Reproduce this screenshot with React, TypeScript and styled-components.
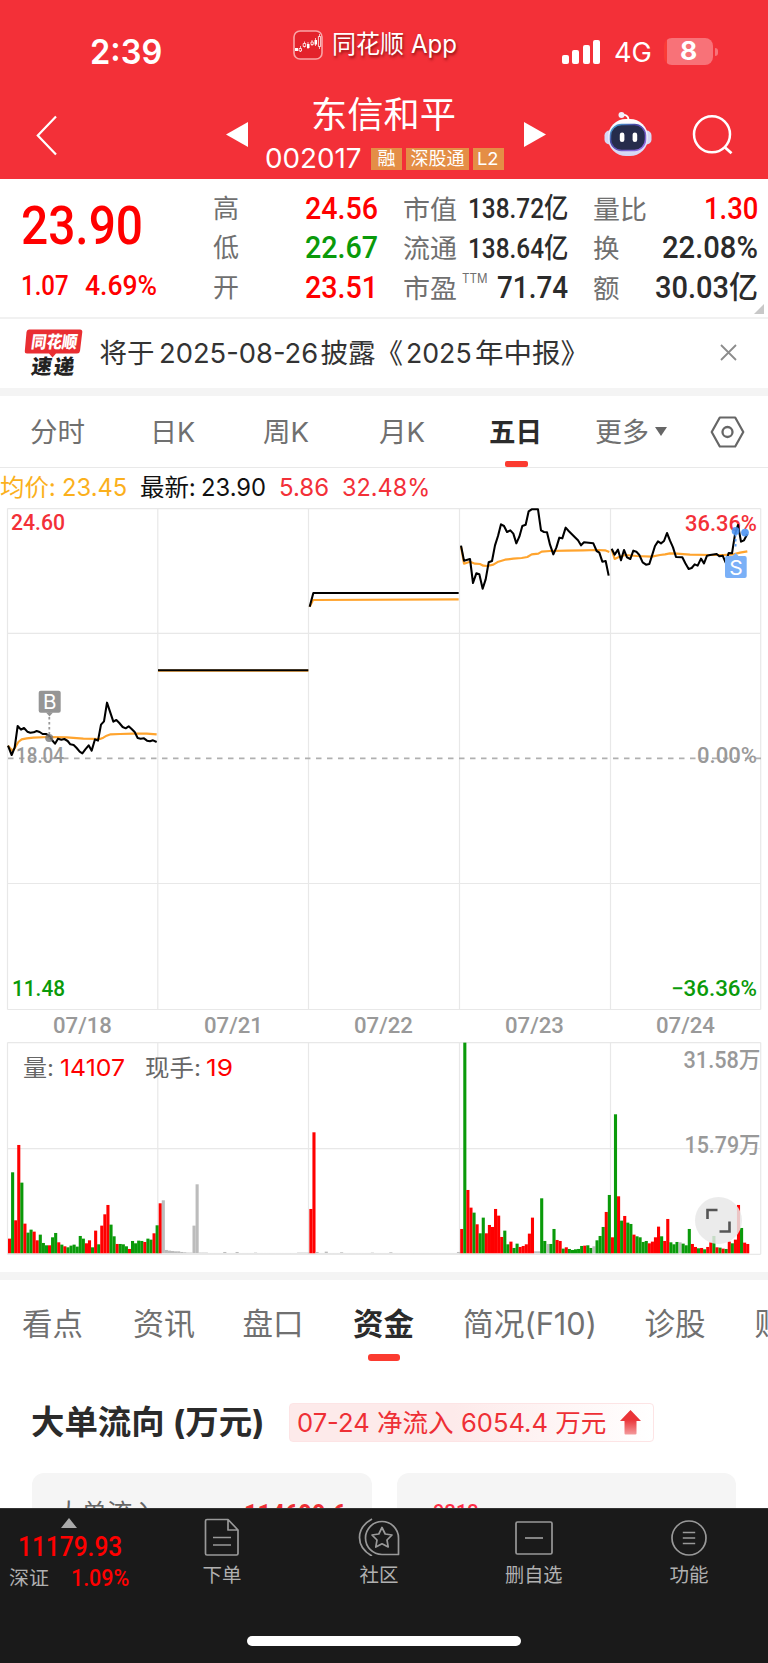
import React, { useLayoutEffect, useRef, useState } from 'react';
import styled, { createGlobalStyle } from 'styled-components';

const DIN = 'Roboto, "Noto Sans CJK SC", sans-serif';
const UI = 'Inter, "Noto Sans CJK SC", sans-serif';

const GlobalStyle = createGlobalStyle`
  * { box-sizing: border-box; }
  body { margin: 0; background: #fff; font-family: ${UI}; }
  svg { display: block; flex: none; }
`;

/* ---------- text fitted to a fixed advance ---------- */
interface TextProps {
  $w: number; $h: number; $size: number; $weight: number; $color: string;
  $din?: boolean; $shadow?: boolean;
}
const TextBox = styled.span<TextProps>`
  display: block;
  flex: none;
  width: ${p => p.$w}px;
  height: ${p => p.$h}px;
  line-height: ${p => p.$h}px;
  font-family: ${p => (p.$din ? DIN : UI)};
  font-size: ${p => p.$size}px;
  font-weight: ${p => p.$weight};
  color: ${p => p.$color};
  white-space: nowrap;
  text-shadow: ${p => (p.$shadow ? '1px 2px 3px rgba(90,0,0,.7)' : 'none')};
`;
const TextInner = styled.span`
  display: inline-block;
  transform-origin: 0 50%;
  white-space: pre;
`;
interface TProps {
  w: number; size: number; h?: number; weight?: number; color?: string;
  din?: boolean; shadow?: boolean; children: string; className?: string;
}
function T({ w, size, h, weight = 400, color = '#333', din, shadow, children, className }: TProps) {
  const ref = useRef<HTMLSpanElement>(null);
  const [scale, setScale] = useState(1);
  useLayoutEffect(() => {
    if (ref.current) setScale(w / ref.current.offsetWidth);
  }, [w, children]);
  return (
    <TextBox className={className} $w={w} $h={h ?? Math.round(size * 1.3)} $size={size}
      $weight={weight} $color={color} $din={din} $shadow={shadow}>
      <TextInner ref={ref} style={{ transform: `scaleX(${scale})` }}>{children}</TextInner>
    </TextBox>
  );
}

const Page = styled.div`
  width: 768px;
  height: 1663px;
  overflow: hidden;
  display: flex;
  flex-direction: column;
  background: #fff;
`;

/* ---------- header ---------- */
const Header = styled.header`
  height: 179px;
  flex: none;
  background: #f33038;
`;
const StatusBar = styled.div`
  height: 90px;
  padding: 13px 50.5px 0 90px;
  display: flex;
  align-items: center;
`;
const AppBadge = styled.div`
  display: flex;
  align-items: center;
  gap: 9px;
  margin: -14px 0 0 131px;
`;
const Signals = styled.div`
  display: flex;
  align-items: center;
  margin-left: auto;
`;
const Bars = styled.div`
  display: flex;
  align-items: flex-end;
  gap: 3.6px;
  width: 52px;
  height: 24px;
`;
const Bar = styled.i<{ $h: number }>`
  width: 7px;
  height: ${p => p.$h}px;
  border-radius: 2px;
  background: #fff;
`;
const Battery = styled.div`
  width: 49px;
  height: 27px;
  margin-left: 12px;
  padding-left: 16px;
  border-radius: 8px;
  background: linear-gradient(90deg, #fa3b36 3.5px, #f87278 3.5px);
`;
const BatteryCap = styled.i`
  width: 3px;
  height: 8px;
  margin-left: 2px;
  border-radius: 0 3px 3px 0;
  background: #f87278;
`;
const NavBar = styled.div`
  height: 89px;
  display: flex;
  align-items: flex-start;
  padding-left: 36px;
`;
const BackIcon = styled.svg`margin-top: 25px;`;
const PrevIcon = styled.svg`margin: 32px 0 0 168px;`;
const NextIcon = styled.svg`margin: 32px 0 0 20px;`;
const RobotIcon = styled.svg`margin: 20px 0 0 57px;`;
const SearchIcon = styled.svg`margin: 24px 0 0 39px;`;
const Title = styled.div`
  width: 239px;
  margin-left: 17px;
`;
const TitleName = styled.div`padding: 1px 0 0 46px;`;
const CodeRow = styled.div`
  display: flex;
  align-items: center;
  gap: 4px;
`;
const Tag = styled.div<{ $w: number }>`
  width: ${p => p.$w}px;
  height: 22px;
  display: flex;
  justify-content: center;
  background: #e48e46;
`;

/* ---------- quote ---------- */
const Quote = styled.section`
  position: relative;
  height: 140px;
  flex: none;
  display: flex;
  border-bottom: 2px solid #f1f1f1;
`;
const PriceCol = styled.div`
  width: 213px;
  padding: 16px 0 0 21px;
`;
const ChangeRow = styled.div`
  display: flex;
  gap: 16px;
  margin-top: 15px;
`;
const StatCol = styled.div<{ $w: number; $ml: number }>`
  width: ${p => p.$w}px;
  margin-left: ${p => p.$ml}px;
  padding-top: 10px;
`;
const StatRow = styled.div`
  height: 39.6px;
  display: flex;
  justify-content: space-between;
  align-items: center;
`;
const Ttm = styled(T)`margin: -19px auto 0 5px;`;
const Corner = styled.i`
  position: absolute;
  right: 4px;
  bottom: 3px;
  border-left: 10px solid transparent;
  border-bottom: 10px solid #c8c8c8;
`;

/* ---------- notice ---------- */
const Notice = styled.section`
  height: 77px;
  flex: none;
  display: flex;
  align-items: center;
  padding: 0 31px 2px 24px;
  border-bottom: 8px solid #f4f4f4;
`;
const NoticeText = styled.div`
  display: flex;
  margin-left: 15.5px;
`;
const CloseIcon = styled.svg`margin-left: auto;`;

/* ---------- period tabs ---------- */
const PeriodTabs = styled.nav`
  height: 72px;
  flex: none;
  display: flex;
  align-items: flex-start;
  padding: 18px 0 0 29.5px;
  border-bottom: 1px solid #e9e9e9;
`;
const Period = styled.div<{ $ml: number; $active?: boolean }>`
  position: relative;
  margin-left: ${p => p.$ml}px;
  &::after {
    content: '';
    display: ${p => (p.$active ? 'block' : 'none')};
    position: absolute;
    left: 15.5px;
    bottom: -16px;
    width: 23px;
    height: 6px;
    border-radius: 2px;
    background: #fb3b30;
  }
`;
const MoreArrow = styled.i`
  margin: 13px 0 0 6px;
  border: 6.5px solid transparent;
  border-top: 9px solid #666;
  border-bottom: 0;
`;
const HexIcon = styled.svg`margin: 2px 0 0 43px;`;

const InfoRow = styled.div`
  height: 40px;
  flex: none;
  display: flex;
  align-items: center;
  padding-bottom: 2px;
`;
const Gap = styled.i<{ $w: number }>`flex: none; width: ${p => p.$w}px;`;

const Dates = styled.div`
  height: 31px;
  flex: none;
  display: flex;
  padding: 0 7px;
`;
const DateCell = styled.div`
  width: 150.8px;
  display: flex;
  justify-content: center;
`;
const VolumePane = styled.div`
  position: relative;
  height: 238px;
  flex: none;
  border-bottom: 8px solid #f4f4f4;
`;
const ExpandButton = styled.button`
  position: absolute;
  left: 694.5px;
  top: 155px;
  width: 47px;
  height: 47px;
  padding: 0;
  border: 0;
  border-radius: 50%;
  background: rgba(232, 232, 232, 0.85);
`;

/* ---------- section tabs and funds ---------- */
const SectionTabs = styled.nav`
  height: 81px;
  flex: none;
  display: flex;
  padding: 21.5px 0 0 22px;
`;
const SectionTab = styled.div<{ $ml: number; $active?: boolean }>`
  position: relative;
  margin-left: ${p => p.$ml}px;
  &::after {
    content: '';
    display: ${p => (p.$active ? 'block' : 'none')};
    position: absolute;
    left: 15px;
    top: 52.5px;
    width: 32px;
    height: 6.5px;
    border-radius: 3px;
    background: #fb3b30;
  }
`;
const FundsHead = styled.div`
  height: 112px;
  flex: none;
  display: flex;
  align-items: flex-start;
  padding: 41px 0 0 31px;
`;
const FlowBadge = styled.div`
  width: 365px;
  height: 39px;
  margin: 1px 0 0 24px;
  padding-left: 6.5px;
  display: flex;
  align-items: center;
  border: 1px solid #fde4e5;
  border-radius: 4px;
  background: linear-gradient(90deg, #fdeaea 45%, #fff);
`;
const ArrowIcon = styled.svg`margin-left: 14.5px;`;
const Cards = styled.div`
  height: 35px;
  flex: none;
  overflow: hidden;
  display: flex;
  gap: 25px;
  padding: 0 32px;
`;
const Card = styled.div`
  width: 339.5px;
  height: 100px;
  display: flex;
  justify-content: space-between;
  padding: 24px 26px 0 24px;
  border-radius: 12px;
  background: #f5f5f5;
`;
const CardValue = styled(T)`margin-top: -2px;`;
const CardNote = styled(T)`margin: -1px 0 0 12px;`;

/* ---------- bottom bar ---------- */
const BottomBar = styled.footer`
  height: 155px;
  flex: none;
  background: #1a1a1a;
  border-top: 1px solid #333;
`;
const BottomRow = styled.div`
  height: 127px;
  display: flex;
`;
const IndexCol = styled.div`
  flex: none;
  width: 149px;
  padding: 9px 0 0 9px;
`;
const UpMark = styled.i`
  display: block;
  width: 0;
  margin-left: 52px;
  border: 8px solid transparent;
  border-bottom: 10px solid #aaa;
  border-top: 0;
`;
const IndexValue = styled.div`padding: 0 0 0 9px;`;
const IndexLine = styled.div`
  display: flex;
  align-items: center;
`;
const BottomItem = styled.div<{ $w: number; $ml?: number }>`
  flex: none;
  width: ${p => p.$w}px;
  margin-left: ${p => p.$ml ?? 0}px;
  display: flex;
  flex-direction: column;
  align-items: center;
  padding-top: 9px;
  gap: 6px;
`;
const HomeBar = styled.div`
  width: 274px;
  height: 10px;
  margin: 0 auto;
  border-radius: 5px;
  background: #fff;
`;

/* ---------- chart data ---------- */
interface Trace { x: number; y: number; price: string; avg: string; }
const TRACES: Trace[] = [
  {
    x: 0, y: 172,
    price: '24,197 35,225 44,203 53,138 63,149 72,144 82,155 91,158 101,157 110,153 119,156 128,162 138,162 147,167 156,180 165,191 174,176 184,179 193,177 203,183 211,193 221,195 230,204 239,215 247,220 256,208 266,196 275,212 285,178 294,182 303,134 312,124 321,68 331,98 340,125 349,120 358,129 368,141 377,145 386,139 395,147 404,156 413,174 422,176 432,175 441,182 450,184 459,181 470,186',
    avg: '24,197 37,212 45,203 55,186 65,178 80,175 100,173 147,171 200,172 250,176 300,177 310,173 320,167 332,163 360,162 400,161 440,161 470,163',
  },
  { x: 0, y: 0, price: '474,487 925,487', avg: '474,488 925,488' },
  { x: 300, y: -8, price: '29,320 40,279 476,279', avg: '29,320 38,302 40,300 476,298' },
  {
    x: 450, y: -13,
    price: '33,152 42,197 60,192 69,264 79,235 88,238 98,281 107,253 116,202 126,198 135,151 144,123 153,88 162,93 171,111 181,106 190,116 199,145 208,125 217,93 227,89 236,49 245,43 264,43 273,106 282,111 291,112 300,149 310,178 319,158 328,128 337,130 347,98 356,108 365,117 374,126 384,136 393,151 402,142 430,145 440,168 448,173 457,200 467,198 476,242',
    avg: '33,155 42,206 60,200 75,206 90,207 100,212 112,213 130,209 145,200 165,194 190,191 215,189 232,186 245,178 265,176 275,170 300,168 350,167 400,166 440,165 465,166 478,171',
  },
  {
    x: 450, y: -13,
    price: '485,161 494,179 504,164 513,196 522,165 531,187 541,192 550,167 559,170 568,180 578,202 588,209 598,207 606,182 615,153 624,139 633,145 642,138 651,114 660,137 669,157 678,186 697,187 706,205 716,222 725,219 734,208 743,212 753,191 762,205 771,182 780,180 800,177 808,184 818,182 827,203 836,174 846,175 855,118 864,90 873,140 882,136 892,117',
    avg: '485,163 494,192 505,187 525,180 560,183 605,185 630,180 645,178 660,175 680,176 720,179 780,180 820,180 850,178 870,173 892,169',
  },
];

const FIRST_DAYS: [string, number][] = (
  'r44 g243 r99 r325 g212 r89 g62 g71 r65 r39 g56 g31 g24 r24 g48 g61 r33 g26 r21 g18 g23 g26 g20 g52 g44 r30 r39 g18 r68 g27 r83 r117 r145 g86 g51 r28 g28 g27 g21 r13 g37 g30 g38 g37 r34 g44 g41 r60 g84 r150 ' +
  'n159 n10 n8 n7 n6 n6 n4 n3 n2 n2 n83 n207 n2 n2 n2 n1 n1 n1 n1 n1 n4 n1 n1 n1 n4 n1 n1 n1 n1 n1 n2 n1 n1 n1 n1 n1 n1 n1 n1 n1 n1 n1 n1 n1 n2 n2 n2 n2 ' +
  'r133 r363 n4 n1 n1 n5 n1 n1 n1 n1 n3 n1 n1 n1 n1 n1 n1 n1 n1 n1 n2 n1 n1 n1 n1 n1 n3 n1 n1 n1 n1 n1 n1 n1 n1 n1 n1 n1 n1 n1 n1 n1 n1 n1 n1 n1 n1 n1 n4'
).split(' ').map(s => [s[0], Number(s.slice(1))]);
const LAST_DAYS: [string, number][] = (
  'r73 g632 r190 r137 g122 r87 g60 g107 r60 r85 r79 r133 r113 r49 g68 g27 r35 g16 g29 r19 r22 r27 r59 r107 n6 n6 g165 g37 n28 g28 g73 r40 r37 g14 r18 g13 g10 g12 g13 g22 r23 g24 g16 n21 g39 g52 g79 r124 g175 ' +
  'r48 g417 r171 g98 r112 g92 g88 r56 g51 g48 g34 g37 r30 r35 r48 r80 g51 r37 r103 g33 g27 g34 n33 g29 g24 g73 r28 r19 g15 r16 g12 r19 r33 g52 r18 g17 r14 g13 r35 g30 r41 r145 g76 r32 r28'
).split(' ').map(s => [s[0], Number(s.slice(1))]);
const BAR_COLORS: Record<string, string> = { r: '#ff0000', g: '#0a9a0a', n: '#bcbcbc' };
const GRID_X = [7.5, 157.8, 308.5, 459.5, 610.5, 760.7];

interface LabelProps {
  x: number; y: number; w: number; size: number; fill: string; weight?: number; font?: string; children: string;
}
function Label({ x, y, w, size, fill, weight = 500, font = DIN, children }: LabelProps) {
  return (
    <text x={x} y={y} textLength={w} lengthAdjust="spacingAndGlyphs" fontFamily={font}
      fontSize={size} fontWeight={weight} fill={fill}>{children}</text>
  );
}

function PriceChart() {
  return (
    <svg width="768" height="503" viewBox="0 0 768 503">
      <g stroke="#e8e8e8" strokeWidth="1.2" fill="none">
        {GRID_X.map(x => <path key={x} d={`M${x} 0.5V501.5`} />)}
        {[0.6, 125.3, 375.5, 501.5].map(y => <path key={y} d={`M7.5 ${y}H760.7`} />)}
      </g>
      <path d="M8 250.3H761" stroke="#b0b0b0" strokeWidth="1.8" strokeDasharray="5.5 5.5" />
      <Label x={16} y={254.5} w={48} size={22} fill="#999">18.04</Label>
      <Label x={697} y={254.5} w={60} size={22} fill="#999">0.00%</Label>
      <Label x={11} y={22} w={54} size={21.5} fill="#f33038">24.60</Label>
      <Label x={685} y={22.5} w={72} size={22.5} fill="#f33038">36.36%</Label>
      <Label x={12} y={487.5} w={53} size={21.5} fill="#0a9a0a">11.48</Label>
      <Label x={671} y={487.5} w={86} size={21.5} fill="#0a9a0a">−36.36%</Label>
      {TRACES.map((t, i) => (
        <g key={i} transform={`translate(${t.x} ${t.y}) scale(.33333)`} fill="none" strokeLinejoin="round">
          <polyline points={t.avg} stroke="#ffa42e" strokeWidth="6.5" />
          <polyline points={t.price} stroke="#000" strokeWidth="6.2" />
        </g>
      ))}
      <path d="M49.3 204V230" stroke="#999" strokeWidth="1.8" strokeDasharray="2.5 2.5" />
      <circle cx="49.2" cy="230" r="4" fill="#777" fillOpacity=".8" />
      <rect x="38.7" y="182.8" width="22" height="22" rx="2" fill="#959595" />
      <path d="M46 204.5H53L49.5 208.5Z" fill="#959595" />
      <Label x={43} y={201.4} w={13.5} size={20} fill="#fff" weight={400} font={UI}>B</Label>
      <path d="M735.6 26V41" stroke="#5a9df2" strokeWidth="1.8" strokeDasharray="2.5 2.5" />
      <circle cx="735.6" cy="23" r="3.9" fill="#4d94f2" fillOpacity=".9" />
      <circle cx="745" cy="24.6" r="3.9" fill="#4d94f2" fillOpacity=".9" />
      <path d="M732 48.5H739L735.6 45Z" fill="#7ab0f7" />
      <rect x="725" y="48" width="21.7" height="22" rx="2" fill="#7ab0f7" />
      <Label x={729.2} y={66.5} w={13.5} size={20} fill="#fff" weight={400} font={UI}>S</Label>
    </svg>
  );
}

function VolumeChart() {
  const bars = (list: [string, number][], x0: number) => list.map(([c, h], i) => (
    <rect key={i} x={x0 + i * 3.075} y={211.3 - h / 3} width={3.1} height={h / 3} fill={BAR_COLORS[c]} />
  ));
  return (
    <svg width="768" height="222" viewBox="0 0 768 222">
      <g stroke="#e8e8e8" strokeWidth="1.2" fill="none">
        {GRID_X.map(x => <path key={x} d={`M${x} 0.5V212.3`} />)}
        {[0.6, 106.6, 212.3].map(y => <path key={y} d={`M7.5 ${y}H760.7`} />)}
      </g>
      {bars(FIRST_DAYS, 8)}
      {bars(LAST_DAYS, 460.2)}
      <Label x={23} y={33.5} w={31} size={23} fill="#666" weight={400} font={UI}>量:</Label>
      <Label x={60} y={33.5} w={65} size={23.5} fill="#ff0000" weight={400} font={UI}>14107</Label>
      <Label x={145} y={33.5} w={56} size={23} fill="#666" weight={400} font={UI}>现手:</Label>
      <Label x={206} y={33.5} w={27} size={23.5} fill="#ff0000" weight={400} font={UI}>19</Label>
      <Label x={683.5} y={25.5} w={77} size={23} fill="#999">31.58万</Label>
      <Label x={684.5} y={111} w={76} size={23} fill="#999">15.79万</Label>
    </svg>
  );
}

const RED = '#ff0000', GREEN = '#0a9a0a', GREY = '#707070', INK = '#2b2b2b';

export default function App() {
  return (
    <Page>
      <GlobalStyle />
      <Header>
        <StatusBar>
          <T w={72} size={33.5} weight={600} color="#fff">2:39</T>
          <AppBadge>
            <svg width="30" height="30" viewBox="0 0 30 30">
              <rect x="1" y="1" width="28" height="28" rx="6" fill="#e3222b" stroke="#f9a5a7" strokeWidth="1.6" />
              <path d="M7.5 16v6M11.5 11.5v6M15 12v7M19 10v6M22.5 8v8M26.5 4v15" stroke="#fff" strokeWidth=".7" />
              <path d="M2 18h3v3H2zM14 14h2.5v4H14zM21.5 10h2.5v4.5h-2.5z" fill="#fff" />
              <path d="M6 18.5h2.5v2.5H6zM10.2 13.5h2.5v3h-2.5zM18 12h2.3v2.5H18zM25.4 6.5h2.2v10h-2.2z" fill="#e3222b" stroke="#fff" strokeWidth=".8" />
            </svg>
            <T w={125} size={25} color="#fff" shadow>同花顺 App</T>
          </AppBadge>
          <Signals>
            <Bars><Bar $h={9} /><Bar $h={14} /><Bar $h={19} /><Bar $h={24} /></Bars>
            <T w={38} size={26.5} color="#fff">4G</T>
            <Battery><T w={17} h={27} size={25} weight={700} color="#fff">8</T></Battery>
            <BatteryCap />
          </Signals>
        </StatusBar>
        <NavBar>
          <BackIcon width="22" height="42" viewBox="0 0 22 42"><path d="M20 1.5 1.8 20.5 20 39.5" fill="none" stroke="#fff" strokeWidth="2.2" /></BackIcon>
          <PrevIcon width="22" height="25" viewBox="0 0 22 25"><path d="M22 0V25L0 12.5Z" fill="#fff" /></PrevIcon>
          <Title>
            <TitleName><T w={145} h={49} size={36} color="#fff">东信和平</T></TitleName>
            <CodeRow>
              <T w={97} h={37} size={27.5} color="#fff">002017</T>
              <Gap $w={0.5} />
              <Tag $w={32}><T w={18} h={21} size={18} color="#fff">融</T></Tag>
              <Tag $w={63}><T w={54} h={21} size={18} color="#fff">深股通</T></Tag>
              <Tag $w={31.5}><T w={22} h={22} size={17.5} color="#fff">L2</T></Tag>
            </CodeRow>
          </Title>
          <NextIcon width="22" height="25" viewBox="0 0 22 25"><path d="M0 0V25L22 12.5Z" fill="#fff" /></NextIcon>
          <RobotIcon width="50" height="48" viewBox="0 0 50 48">
            <defs>
              <linearGradient id="shell" x1="0" y1="0" x2="0" y2="1"><stop offset="0" stopColor="#fff" /><stop offset="1" stopColor="#d3d5f5" /></linearGradient>
              <linearGradient id="rim" x1="0" y1="0" x2="1" y2="1"><stop offset="0" stopColor="#47b8dc" /><stop offset=".35" stopColor="#4947a5" /><stop offset="1" stopColor="#a174ee" /></linearGradient>
            </defs>
            <path d="M9 5.5C13 4 16.5 5.5 16.5 10" transform="translate(9 0)" fill="none" stroke="#fff" strokeWidth="1.8" />
            <circle cx="18.500" cy="5" r="3" fill="#f1effc" />
            <rect x="1.5" y="20.500" width="47" height="14" rx="5" fill="#d7d8f5" />
            <rect x="5" y="9" width="40" height="37" rx="18" fill="url(#shell)" />
            <rect x="7.5" y="14.500" width="35" height="26" rx="11" fill="#262c4c" stroke="url(#rim)" strokeWidth="1.500" />
            <rect x="16.800" y="22.500" width="4.600" height="9.500" rx="2.300" fill="#fff" />
            <rect x="29.600" y="22.500" width="4.600" height="9.500" rx="2.300" fill="#fff" />
          </RobotIcon>
          <SearchIcon width="42" height="42" viewBox="0 0 42 42"><circle cx="20" cy="20.3" r="18" fill="none" stroke="#fff" strokeWidth="2.5" /><path d="M32.500 33 39.500 39.300" stroke="#fff" strokeWidth="2.8" /></SearchIcon>
        </NavBar>
      </Header>

      <Quote>
        <PriceCol>
          <T din w={122} h={60} size={54.5} weight={500} color={RED}>23.90</T>
          <ChangeRow>
            <T din w={48} h={31} size={28} weight={500} color={RED}>1.07</T>
            <T din w={72} h={31} size={28} weight={500} color={RED}>4.69%</T>
          </ChangeRow>
        </PriceCol>
        <StatCol $w={165} $ml={0}>
          <StatRow><T w={26} size={26} color={GREY}>高</T><T din w={73} size={31} weight={500} color={RED}>24.56</T></StatRow>
          <StatRow><T w={26} size={26} color={GREY}>低</T><T din w={73} size={31} weight={500} color={GREEN}>22.67</T></StatRow>
          <StatRow><T w={26} size={26} color={GREY}>开</T><T din w={73} size={31} weight={500} color={RED}>23.51</T></StatRow>
        </StatCol>
        <StatCol $w={165} $ml={24.5}>
          <StatRow><T w={54} size={26.5} color={GREY}>市值</T><T din w={100} size={28.5} weight={500} color={INK}>138.72亿</T></StatRow>
          <StatRow><T w={54} size={26.5} color={GREY}>流通</T><T din w={100} size={28.5} weight={500} color={INK}>138.64亿</T></StatRow>
          <StatRow><T w={54} h={38} size={26.5} color={GREY}>市盈</T><Ttm w={26} h={14} size={13} color={GREY}>TTM</Ttm><T din w={71} size={31} weight={500} color={INK}>71.74</T></StatRow>
        </StatCol>
        <StatCol $w={165} $ml={25.5}>
          <StatRow><T w={54} size={26.5} color={GREY}>量比</T><T din w={54} size={31} weight={500} color={RED}>1.30</T></StatRow>
          <StatRow><T w={27} size={26.5} color={GREY}>换</T><T din w={96} size={31} weight={500} color={INK}>22.08%</T></StatRow>
          <StatRow><T w={27} size={26.5} color={GREY}>额</T><T din w={103} size={31} weight={500} color={INK}>30.03亿</T></StatRow>
        </StatCol>
        <Corner />
      </Quote>

      <Notice>
        <svg width="60" height="50" viewBox="0 0 60 50">
          <path d="M5 1.500H56Q58.500 1.500 58.300 4L56 23Q55.600 25.500 53 25.500H32L28.500 29.500 25 25.500H3Q.6 25.500 .8 23L2.500 4Q2.800 1.500 5 1.500Z" fill="#e92e32" />
          <g transform="skewX(-8)" fontFamily={UI} fontWeight="900">
            <text x="9.500" y="20.500" fontSize="17" textLength="46" lengthAdjust="spacingAndGlyphs" fill="#fff">同花顺</text>
            <text x="13" y="46" fontSize="20.500" textLength="43" fill="#222">速递</text>
          </g>
        </svg>
        <NoticeText>
          <T w={55} size={27.5}>将于</T>
          <Gap $w={4} />
          <T w={159} size={27.5}>2025-08-26</T>
          <Gap $w={3} />
          <T w={83} size={27.5}>披露《</T>
          <Gap $w={2} />
          <T w={66} size={27.5}>2025</T>
          <Gap $w={3} />
          <T w={114} size={27.5}>年中报》</T>
        </NoticeText>
        <CloseIcon width="17" height="17" viewBox="0 0 17 17"><path d="M1 1 16 16M16 1 1 16" stroke="#8c8c8c" strokeWidth="1.8" /></CloseIcon>
      </Notice>

      <PeriodTabs>
        <Period $ml={0}><T w={55} h={37} size={27} color={GREY}>分时</T></Period>
        <Period $ml={65.5}><T w={45} h={37} size={27} color={GREY}>日K</T></Period>
        <Period $ml={68}><T w={46} h={37} size={27} color={GREY}>周K</T></Period>
        <Period $ml={70}><T w={46} h={37} size={27} color={GREY}>月K</T></Period>
        <Period $ml={64} $active><T w={53} h={37} size={27} weight={700} color={INK}>五日</T></Period>
        <Period $ml={53}><T w={54} h={37} size={27} color={GREY}>更多</T></Period>
        <MoreArrow />
        <HexIcon width="35" height="32" viewBox="0 0 35 32">
          <path d="M9.8 1.5H25.2L33.3 16 25.2 30.5H9.8L1.7 16Z" fill="none" stroke="#666" strokeWidth="2.2" strokeLinejoin="round" />
          <circle cx="17.5" cy="16" r="5" fill="none" stroke="#666" strokeWidth="2.3" />
        </HexIcon>
      </PeriodTabs>

      <InfoRow>
        <T w={56} size={24} color="#fbb01c">均价:</T><Gap $w={6} />
        <T w={65} size={24.5} color="#fbb01c">23.45</T><Gap $w={13} />
        <T w={56} size={24} color="#111">最新:</T><Gap $w={5} />
        <T w={65} size={24.5} color="#111">23.90</T><Gap $w={13} />
        <T w={50} size={24.5} color="#f33038">5.86</T><Gap $w={13} />
        <T w={88} size={24.5} color="#f33038">32.48%</T>
      </InfoRow>
      <PriceChart />
      <Dates>
        {['07/18', '07/21', '07/22', '07/23', '07/24'].map(d => (
          <DateCell key={d}><T din w={59} h={29} size={22.5} weight={500} color="#999">{d}</T></DateCell>
        ))}
      </Dates>
      <VolumePane>
        <VolumeChart />
        <ExpandButton>
          <svg width="47" height="47" viewBox="0 0 47 47"><path d="M12.5 22V13H22.5M34.5 24.5V34.5H24.5" fill="none" stroke="#555" strokeWidth="2.6" /></svg>
        </ExpandButton>
      </VolumePane>

      <SectionTabs>
        <SectionTab $ml={0}><T w={61} h={44} size={30.5} color={GREY}>看点</T></SectionTab>
        <SectionTab $ml={49.5}><T w={62} h={44} size={30.5} color={GREY}>资讯</T></SectionTab>
        <SectionTab $ml={48}><T w={61} h={44} size={30.5} color={GREY}>盘口</T></SectionTab>
        <SectionTab $ml={49.5} $active><T w={61} h={44} size={30.5} weight={700} color={INK}>资金</T></SectionTab>
        <SectionTab $ml={49}><T w={134} h={44} size={30.5} color={GREY}>简况(F10)</T></SectionTab>
        <SectionTab $ml={47.5}><T w={61} h={44} size={30.5} color={GREY}>诊股</T></SectionTab>
        <SectionTab $ml={49}><T w={61} h={44} size={30.5} color={GREY}>财务</T></SectionTab>
      </SectionTabs>
      <FundsHead>
        <T w={234} h={41} size={33} weight={700} color={INK}>大单流向 (万元)</T>
        <FlowBadge>
          <T w={309} h={36} size={25.5} color="#ee2f35">07-24 净流入 6054.4 万元</T>
          <ArrowIcon width="21" height="25" viewBox="0 0 21 25">
            <defs><linearGradient id="up" x1="0" y1="0" x2="0" y2="1"><stop offset=".4" stopColor="#ea3438" /><stop offset="1" stopColor="#f49a9c" /></linearGradient></defs>
            <path d="M10.5 0 21 11H16.5V23.5Q16.5 24.5 15.5 24.5H5.5Q4.5 24.5 4.5 23.5V11H0Z" fill="url(#up)" />
          </ArrowIcon>
        </FlowBadge>
      </FundsHead>
      <Cards>
        <Card><T w={102} h={32} size={25} color="#666">大单流入</T><CardValue din w={102} h={38} size={26} weight={700} color="#ee2f35">114699.6</CardValue></Card>
        <Card><CardNote din w={46} h={32} size={21} weight={500} color="#ff2d46">9313</CardNote></Card>
      </Cards>

      <BottomBar>
        <BottomRow>
          <IndexCol>
            <UpMark />
            <IndexValue><T din w={104} h={38} size={28.5} weight={500} color={RED}>11179.93</T></IndexValue>
            <IndexLine>
              <T w={40} h={24} size={19.5} color="#b0b0b0">深证</T><Gap $w={22} />
              <T din w={58} h={24} size={24} weight={500} color={RED}>1.09%</T>
            </IndexLine>
          </IndexCol>
          <BottomItem $w={146}>
            <svg width="36" height="38" viewBox="0 0 36 38"><g fill="none" stroke="#999" strokeWidth="1.7" strokeLinejoin="round"><path d="M3 1.5H24L34 12V35.5Q34 37 32.5 37H3Q1.5 37 1.5 35.5V3Q1.5 1.5 3 1.5ZM24 1.5V12H34M9 19.5H27M9 27H27" /></g></svg>
            <T w={39} h={26} size={19.5} color="#b0b0b0">下单</T>
          </BottomItem>
          <BottomItem $w={168}>
            <svg width="42" height="38" viewBox="0 0 42 38"><g fill="none" stroke="#999" strokeWidth="1.7" strokeLinejoin="round"><path d="M14 1Q1.5 8 1.5 19.5 1.5 31 14 38M24 3.5A16.5 16.5 0 1 0 24 36.5H40.5V20A16.5 16.5 0 0 0 24 3.5Z" /><path d="M24 9.5 27.2 16 34 17 29 22 30.2 29 24 25.8 17.8 29 19 22 14 17 20.8 16Z" /></g></svg>
            <T w={39} h={26} size={19.5} color="#b0b0b0">社区</T>
          </BottomItem>
          <BottomItem $w={142}>
            <svg width="38" height="38" viewBox="0 0 38 38"><g fill="none" stroke="#999" strokeWidth="1.7"><rect x="1" y="4" width="36" height="32" rx="1.5" /><path d="M10 20H28" /></g></svg>
            <T w={58} h={26} size={19.5} color="#b0b0b0">删自选</T>
          </BottomItem>
          <BottomItem $w={158} $ml={5}>
            <svg width="38" height="38" viewBox="0 0 38 38"><g fill="none" stroke="#999" strokeWidth="1.7"><circle cx="19" cy="20" r="17" /><path d="M12.8 14.5H25.2M12.8 20H25.2M12.8 25.5H25.2" /></g></svg>
            <T w={39} h={26} size={19.5} color="#b0b0b0">功能</T>
          </BottomItem>
        </BottomRow>
        <HomeBar />
      </BottomBar>
    </Page>
  );
}
